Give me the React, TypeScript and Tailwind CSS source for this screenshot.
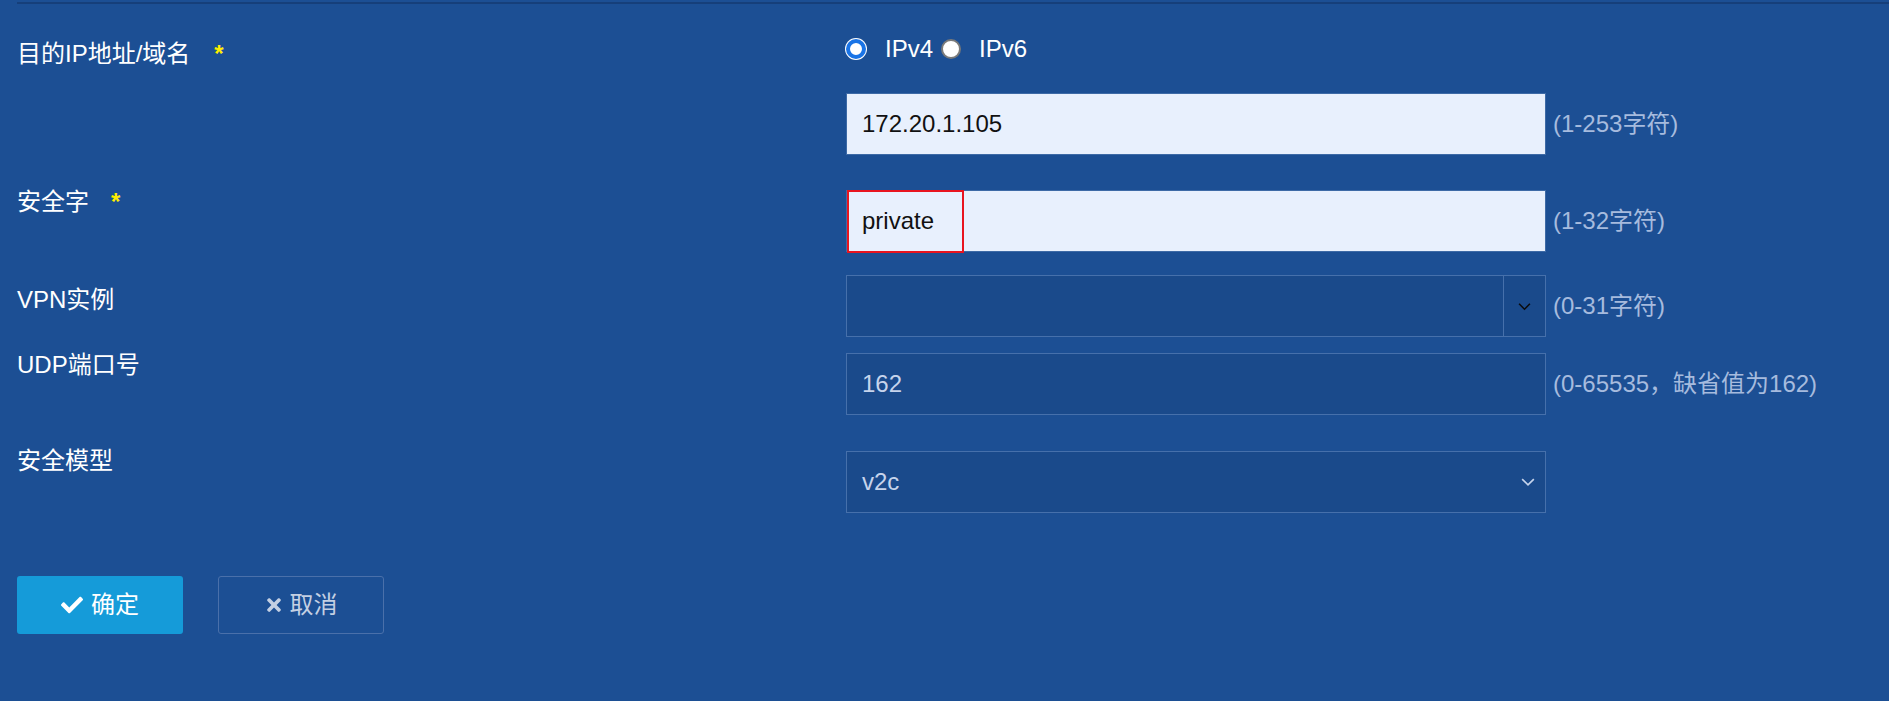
import { FaCheck, FaTimes } from 'react-icons/fa'

const font = "font-['Liberation_Sans','Noto_Sans_CJK_SC',sans-serif]"

function Chevron({ className }: { className: string }) {
  return (
    <svg viewBox="0 0 12 8" className={className} fill="none" stroke="currentColor" strokeWidth="1.4">
      <path d="M1 1.5 6 6.5 11 1.5" />
    </svg>
  )
}

function Hint({ text }: { text: string }) {
  return <span className="ml-[7px] text-[24px] leading-[28px] text-[#a6bbde] whitespace-nowrap">{text}</span>
}

function Label({ text, required, offset, starGap }: { text: string; required?: boolean; offset: string; starGap?: string }) {
  return (
    <div className={`w-[829px] shrink-0 flex items-start text-[24px] leading-[28px] text-white ${offset}`}>
      <span>{text}</span>
      {required && <span className={`${starGap ?? 'ml-[24px]'} text-[#ffee00] font-bold`}>*</span>}
    </div>
  )
}

export default function App() {
  return (
    <div className={`min-h-screen bg-[#1c4f94] ${font}`}>
      <div className="pt-[2px] pl-[17px]">
        <div className="h-[2px] bg-[#163f7a]" />
      </div>

      <div className="pl-[17px]">
        {/* Destination */}
        <div className="flex items-start mt-[31px]">
          <Label text="目的IP地址/域名" required offset="mt-[5px]" />
          <div className="flex items-center h-[28px] text-[24px] text-white">
            <span className="w-[20px] h-[20px] rounded-full bg-white border-[4px] border-[#1a74e6] ring-1 ring-white" />
            <span className="ml-[19px]">IPv4</span>
            <span className="ml-[8px] w-[20px] h-[20px] rounded-full bg-white border-[2px] border-[#7a7a7a]" />
            <span className="ml-[18px]">IPv6</span>
          </div>
        </div>

        <div className="flex items-center mt-[25px]">
          <div className="w-[829px] shrink-0" />
          <div className="w-[700px] h-[62px] bg-[#e8f0fd] border border-[#3d6aa6] flex items-center pl-[15px] text-[24px] text-[#111]">
            172.20.1.105
          </div>
          <Hint text="(1-253字符)" />
        </div>

        {/* Community */}
        <div className="flex items-start mt-[35px]">
          <Label text="安全字" required offset="-mt-[2px]" starGap="ml-[22px]" />
          <div className="flex items-center">
            <div className="relative w-[700px] h-[62px] bg-[#e8f0fd] border border-[#3d6aa6] flex items-center pl-[15px] text-[24px] text-[#111]">
              private
              <div className="absolute left-0 top-0 w-[117px] h-[63px] -translate-y-[1px] border-2 border-[#e8141f]" />
            </div>
            <Hint text="(1-32字符)" />
          </div>
        </div>

        {/* VPN */}
        <div className="flex items-start mt-[23px]">
          <Label text="VPN实例" offset="mt-[11px]" />
          <div className="flex items-center">
            <div className="w-[700px] h-[62px] bg-[#1a4a8b] border border-[#4670ab] flex">
              <div className="flex-1" />
              <div className="w-[42px] border-l border-[#4670ab] flex items-center justify-center">
                <Chevron className="w-[13px] h-[9px] text-[#0b0b0b]" />
              </div>
            </div>
            <Hint text="(0-31字符)" />
          </div>
        </div>

        {/* UDP port */}
        <div className="flex items-start mt-[16px]">
          <Label text="UDP端口号" offset="-mt-[2px]" />
          <div className="flex items-center">
            <div className="w-[700px] h-[62px] bg-[#1a4a8b] border border-[#4670ab] flex items-center pl-[15px] text-[24px] text-[#c6d4ec]">
              162
            </div>
            <Hint text="(0-65535，缺省值为162)" />
          </div>
        </div>

        {/* Security model */}
        <div className="flex items-start mt-[36px]">
          <Label text="安全模型" offset="-mt-[4px]" />
          <div className="w-[700px] h-[62px] bg-[#1a4a8b] border border-[#4670ab] flex items-center justify-between pl-[15px] pr-[10px] text-[24px] text-[#c6d4ec]">
            <span>v2c</span>
            <Chevron className="w-[14px] h-[10px] text-[#c6d4ec]" />
          </div>
        </div>

        {/* Actions */}
        <div className="flex items-center gap-[35px] mt-[63px]">
          <button className="w-[166px] h-[58px] rounded-[3px] bg-[#159bd9] text-white text-[24px] flex items-center justify-center gap-[8px]">
            <FaCheck className="w-[22px] h-[22px]" />
            确定
          </button>
          <button className="w-[166px] h-[58px] rounded-[3px] border border-[#4a70aa] text-[#c4d0e3] text-[24px] flex items-center justify-center gap-[7px]">
            <FaTimes className="w-[18px] h-[20px]" />
            取消
          </button>
        </div>
      </div>
    </div>
  )
}
